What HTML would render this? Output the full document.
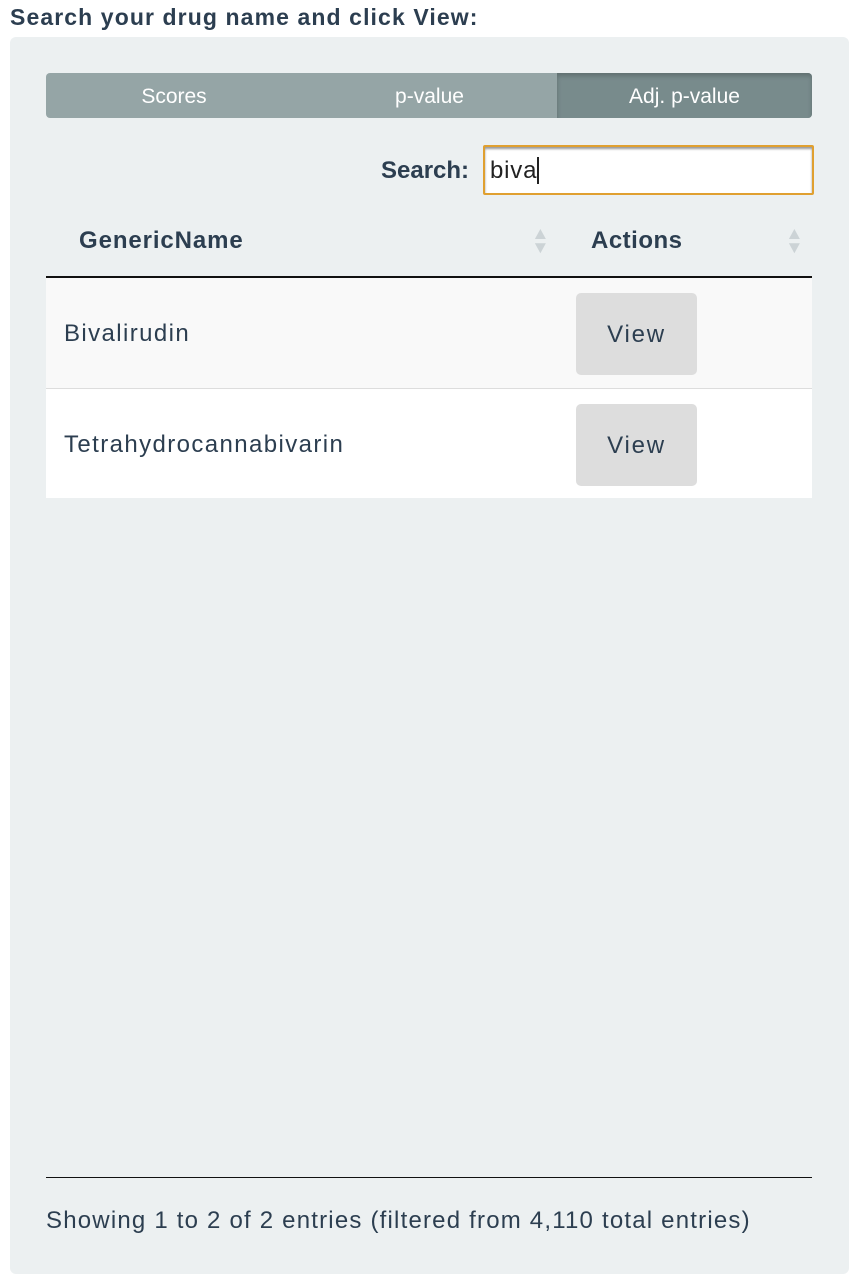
<!DOCTYPE html>
<html><head><style>
body{margin:0;width:856px;height:1283px;background:#fff;font-family:"Liberation Sans",sans-serif;color:#2c3e50;position:relative;overflow:hidden}
.a{position:absolute}
h1{position:absolute;left:10px;top:4px;margin:0;font-size:23px;font-weight:bold;color:#2c3e50;letter-spacing:1.1px}
.panel{left:10px;top:37px;width:839px;height:1237px;background:#ecf0f1;border-radius:6px}
.tabs{left:46px;top:73px;width:766px;height:45px;background:#95a5a6;border-radius:4px;overflow:hidden}
.tab{position:absolute;top:0;height:47px;line-height:47px;text-align:center;color:#fff;font-size:21px}
.row{left:46px;width:766px;font-size:24px;letter-spacing:1.4px}
.btn{position:absolute;left:530px;width:121px;height:82px;background:#dddddd;border-radius:5px;text-align:center;line-height:84px;font-size:24px;color:#2c3e50;letter-spacing:1.8px}
.sort{color:#ccd3d6;font-size:17px;line-height:14px;transform:scaleX(1.1)}
</style></head><body>
<h1>Search your drug name and click View:</h1>
<div class="a panel"></div>
<div class="a tabs">
<div class="tab" style="left:0;width:256px">Scores</div>
<div class="tab" style="left:256px;width:255px">p-value</div>
<div class="tab" style="left:511px;width:255px;background:#788b8c;box-shadow:inset 0 3px 5px rgba(0,0,0,.2)">Adj. p-value</div>
</div>
<div class="a" style="left:381px;top:157px;font-size:24px;font-weight:bold;color:#2c3e50">Search:</div>
<div class="a" style="left:483px;top:145px;width:327px;height:46px;border:2px solid #e0a030;border-radius:2px;background:#fff;box-shadow:inset 0 2px 2px #999"></div>
<div class="a" style="left:490px;top:157px;font-size:24px;color:#222;letter-spacing:0.8px">biva<span style="border-left:2px solid #222"></span></div>
<div class="a" style="left:79px;top:227px;font-size:24px;font-weight:bold;letter-spacing:0.9px">GenericName</div>
<div class="a" style="left:591px;top:227px;font-size:24px;font-weight:bold;letter-spacing:0.5px">Actions</div>
<div class="a sort" style="left:532px;top:227px">▲<br>▼</div>
<div class="a sort" style="left:786px;top:227px">▲<br>▼</div>
<div class="a" style="left:46px;top:276px;width:766px;height:2px;background:#111"></div>
<div class="a row" style="top:278px;height:110px;background:#f9f9f9;border-bottom:1px solid #ddd">
<div class="a" style="left:18px;top:42px">Bivalirudin</div>
<div class="btn" style="top:15px">View</div></div>
<div class="a row" style="top:389px;height:109px;background:#fff">
<div class="a" style="left:18px;top:42px">Tetrahydrocannabivarin</div>
<div class="btn" style="top:15px">View</div></div>
<div class="a" style="left:46px;top:1177px;width:766px;height:1px;background:#111"></div>
<div class="a" style="left:46px;top:1207px;font-size:24px;color:#2c3e50;letter-spacing:1.2px">Showing 1 to 2 of 2 entries (filtered from 4,110 total entries)</div>
</body></html>
